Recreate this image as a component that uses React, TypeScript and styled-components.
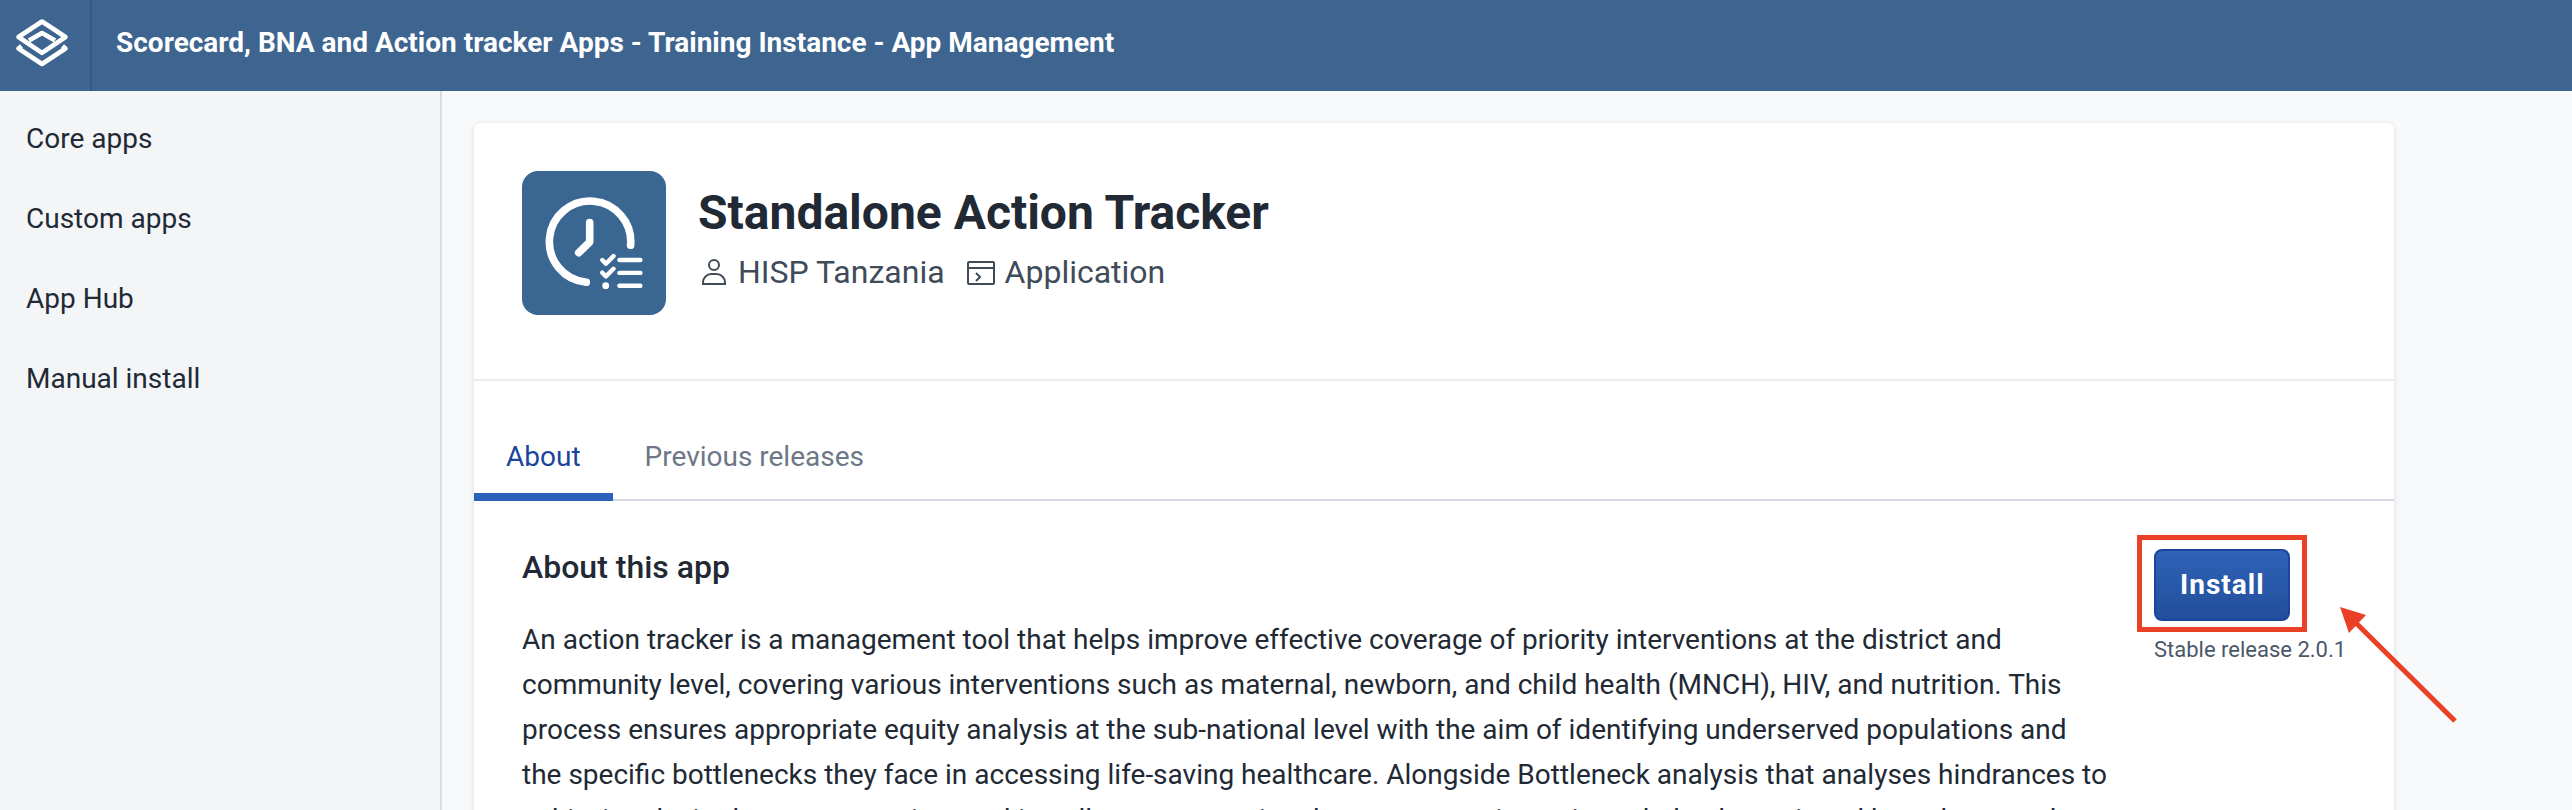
import React from "react";
import styled, { createGlobalStyle } from "styled-components";

const GlobalStyle = createGlobalStyle`
  *, *::before, *::after { box-sizing: border-box; }
  html, body { margin: 0; padding: 0; }
  body {
    font-family: Roboto, "Noto Sans", "Liberation Sans", sans-serif;
    color: #212934;
    background: #f8f9fb;
    overflow: hidden;
  }
`;

const Page = styled.div`
  display: flex;
  flex-direction: column;
  height: 100vh;
`;

const HeaderBar = styled.header`
  display: flex;
  flex: none;
  align-items: stretch;
  height: 91px;
  background: #3d6590;
  color: #fff;
`;

const LogoLink = styled.a`
  display: flex;
  width: 92px;
  border-right: 2px solid #375a84;
`;

const HeaderTitle = styled.div`
  padding: 26px 24px;
  font-size: 28px;
  line-height: 34px;
  font-weight: 700;
`;

const Body = styled.div`
  display: flex;
  flex: 1;
  min-height: 0;
`;

const Sidebar = styled.nav`
  flex: none;
  width: 442px;
  padding-top: 8px;
  background: #f3f5f7;
  border-right: 2px solid #d5dde5;
`;

const NavList = styled.ul`
  margin: 0;
  padding: 0;
  list-style: none;
`;

const NavLink = styled.a`
  display: block;
  padding: 24px 26px;
  font-size: 28px;
  line-height: 32px;
  color: inherit;
  text-decoration: none;
`;

const Main = styled.main`
  flex: 1;
  min-width: 0;
  padding: 32px;
  overflow: hidden;
`;

const Card = styled.article`
  max-width: 1920px;
  background: #fff;
  border-radius: 6px;
  box-shadow: 0 2px 6px rgba(33, 41, 52, 0.12), 0 0 2px rgba(33, 41, 52, 0.06);
`;

const AppHeader = styled.div`
  display: flex;
  gap: 32px;
  padding: 48px 48px 64px;
  border-bottom: 2px solid #e8edf2;
`;

const AppIcon = styled.svg`
  flex: none;
  width: 144px;
  height: 144px;
  border-radius: 16px;
  background: #3a6692;
`;

const AppTitle = styled.h1`
  margin: 0;
  padding-top: 14px;
  font-size: 48px;
  line-height: 56px;
  font-weight: 700;
`;

const MetaRow = styled.div`
  display: flex;
  gap: 20px;
  padding-top: 11px;
  color: #404b5a;
  font-size: 32px;
  line-height: 40px;
`;

const MetaItem = styled.span`
  display: flex;
  align-items: center;
  gap: 8px;
`;

const MetaIcon = styled.svg`
  width: 32px;
  height: 32px;
  fill: none;
  stroke: currentColor;
  stroke-width: 2;
`;

const TabBar = styled.div`
  display: flex;
  margin-top: 32px;
  box-shadow: inset 0 -2px 0 #d5dae4;
`;

const Tab = styled.button<{ $selected?: boolean }>`
  padding: 28px 32px 20px;
  border: 0;
  border-bottom: 8px solid ${(p) => (p.$selected ? "#2c61bb" : "transparent")};
  background: none;
  font: inherit;
  font-size: 28px;
  line-height: 32px;
  color: ${(p) => (p.$selected ? "#1b449c" : "#6c7787")};
`;

const Section = styled.section`
  display: flex;
  align-items: flex-start;
  gap: 44px;
  padding: 48px;
`;

const Description = styled.div`
  flex: 1;
  min-width: 0;
`;

const SectionTitle = styled.h2`
  margin: 0 0 32px;
  font-size: 32px;
  line-height: 36px;
  font-weight: 500;
`;

const Paragraph = styled.p`
  margin: 0;
  font-size: 28px;
  line-height: 45px;
`;

const InstallPanel = styled.div`
  flex: none;
  width: 192px;
`;

const InstallAnchor = styled.div`
  position: relative;
  width: fit-content;
`;

const InstallButton = styled.button`
  display: block;
  height: 72px;
  padding: 0 23px 2px 24px;
  border: 2px solid #1b449c;
  border-radius: 8px;
  background: linear-gradient(180deg, #2f63ba 0%, #2b5cae 30%, #224f9c 100%);
  color: #fff;
  font: inherit;
  font-size: 28px;
  font-weight: 700;
  letter-spacing: 1px;
`;

const Highlight = styled.div`
  position: absolute;
  inset: -14px -17px -11px -17px;
  border: 5px solid #ea4025;
  pointer-events: none;
`;

const Arrow = styled.svg`
  position: absolute;
  left: 185px;
  top: 57px;
  width: 120px;
  height: 118px;
  pointer-events: none;
`;

const Release = styled.div`
  padding-top: 15px;
  font-size: 22px;
  line-height: 28px;
  color: #4a5768;
  white-space: nowrap;
`;

const navItems = ["Core apps", "Custom apps", "App Hub", "Manual install"];

function Logo() {
  return (
    <svg width="90" height="91" viewBox="0 0 90 91" fill="none" stroke="#fff" strokeWidth="4.6" strokeLinejoin="round" aria-label="Home">
      <path d="M42 21.5 65.5 37 42 52.8 18.500 37Z" />
      <path d="M29 40.500 42 33l13 7.500" />
      <path d="M21.500 46 18.500 48.500 42 64l23.500-15.500-3-2.500" />
    </svg>
  );
}

function ActionTrackerIcon() {
  return (
    <AppIcon viewBox="0 0 144 144" fill="none" stroke="#fff" strokeLinecap="round" strokeLinejoin="round" aria-hidden="true">
      <g strokeWidth="7.600">
        <path d="M64.300 111.300A40.700 40.700 0 1 1 108.600 74.300" />
        <path d="M67.700 51.500V71L56.700 81.700" />
      </g>
      <g strokeWidth="4.400">
        <path d="M80.300 89l3.600 3.700 7.600-7.600M80.300 101.700l3.600 3.700 7.600-7.600" />
        <path d="M97.400 89h21M97.400 101.900h21M97.400 114.700h21" />
      </g>
      <circle cx="83.700" cy="114.700" r="3.400" fill="#fff" stroke="none" />
    </AppIcon>
  );
}

export default function App() {
  return (
    <>
      <GlobalStyle />
      <Page>
        <HeaderBar>
          <LogoLink href="#">
            <Logo />
          </LogoLink>
          <HeaderTitle>Scorecard, BNA and Action tracker Apps - Training Instance - App Management</HeaderTitle>
        </HeaderBar>
        <Body>
          <Sidebar>
            <NavList>
              {navItems.map((label) => (
                <li key={label}>
                  <NavLink href="#">{label}</NavLink>
                </li>
              ))}
            </NavList>
          </Sidebar>
          <Main>
            <Card>
              <AppHeader>
                <ActionTrackerIcon />
                <div>
                  <AppTitle>Standalone Action Tracker</AppTitle>
                  <MetaRow>
                    <MetaItem>
                      <MetaIcon viewBox="0 0 32 32" aria-hidden="true">
                        <circle cx="16" cy="9" r="5" />
                        <path d="M5 28v-1.500a8.500 8.500 0 0 1 8.500-8.500h5a8.500 8.500 0 0 1 8.500 8.500V28z" />
                      </MetaIcon>
                      HISP Tanzania
                    </MetaItem>
                    <MetaItem>
                      <MetaIcon viewBox="0 0 32 32" aria-hidden="true">
                        <rect x="3" y="6" width="26" height="22" rx="1" />
                        <path d="M3 12h26M11 17l4 4-4 4" />
                      </MetaIcon>
                      Application
                    </MetaItem>
                  </MetaRow>
                </div>
              </AppHeader>
              <TabBar role="tablist">
                <Tab role="tab" aria-selected="true" $selected>
                  About
                </Tab>
                <Tab role="tab" aria-selected="false">
                  Previous releases
                </Tab>
              </TabBar>
              <Section>
                <Description>
                  <SectionTitle>About this app</SectionTitle>
                  <Paragraph>
                    An action tracker is a management tool that helps improve effective coverage of priority
                    interventions at the district and community level, covering various interventions such as
                    maternal, newborn, and child health (MNCH), HIV, and nutrition. This process ensures appropriate
                    equity analysis at the sub-national level with the aim of identifying underserved populations and
                    the specific bottlenecks they face in accessing life-saving healthcare. Alongside Bottleneck
                    analysis that analyses hindrances to achieving desired coverage, action tracking allows
                    overcoming department registers intended to be actioned based on rated
                  </Paragraph>
                </Description>
                <InstallPanel>
                  <InstallAnchor>
                    <InstallButton>Install</InstallButton>
                    <Highlight />
                    <Arrow viewBox="0 0 120 118" aria-hidden="true">
                      <path d="M17 17 116 115" stroke="#ea4025" strokeWidth="5" />
                      <path d="M1 1 27 9 10 27Z" fill="#ea4025" />
                    </Arrow>
                  </InstallAnchor>
                  <Release>Stable release 2.0.1</Release>
                </InstallPanel>
              </Section>
            </Card>
          </Main>
        </Body>
      </Page>
    </>
  );
}
